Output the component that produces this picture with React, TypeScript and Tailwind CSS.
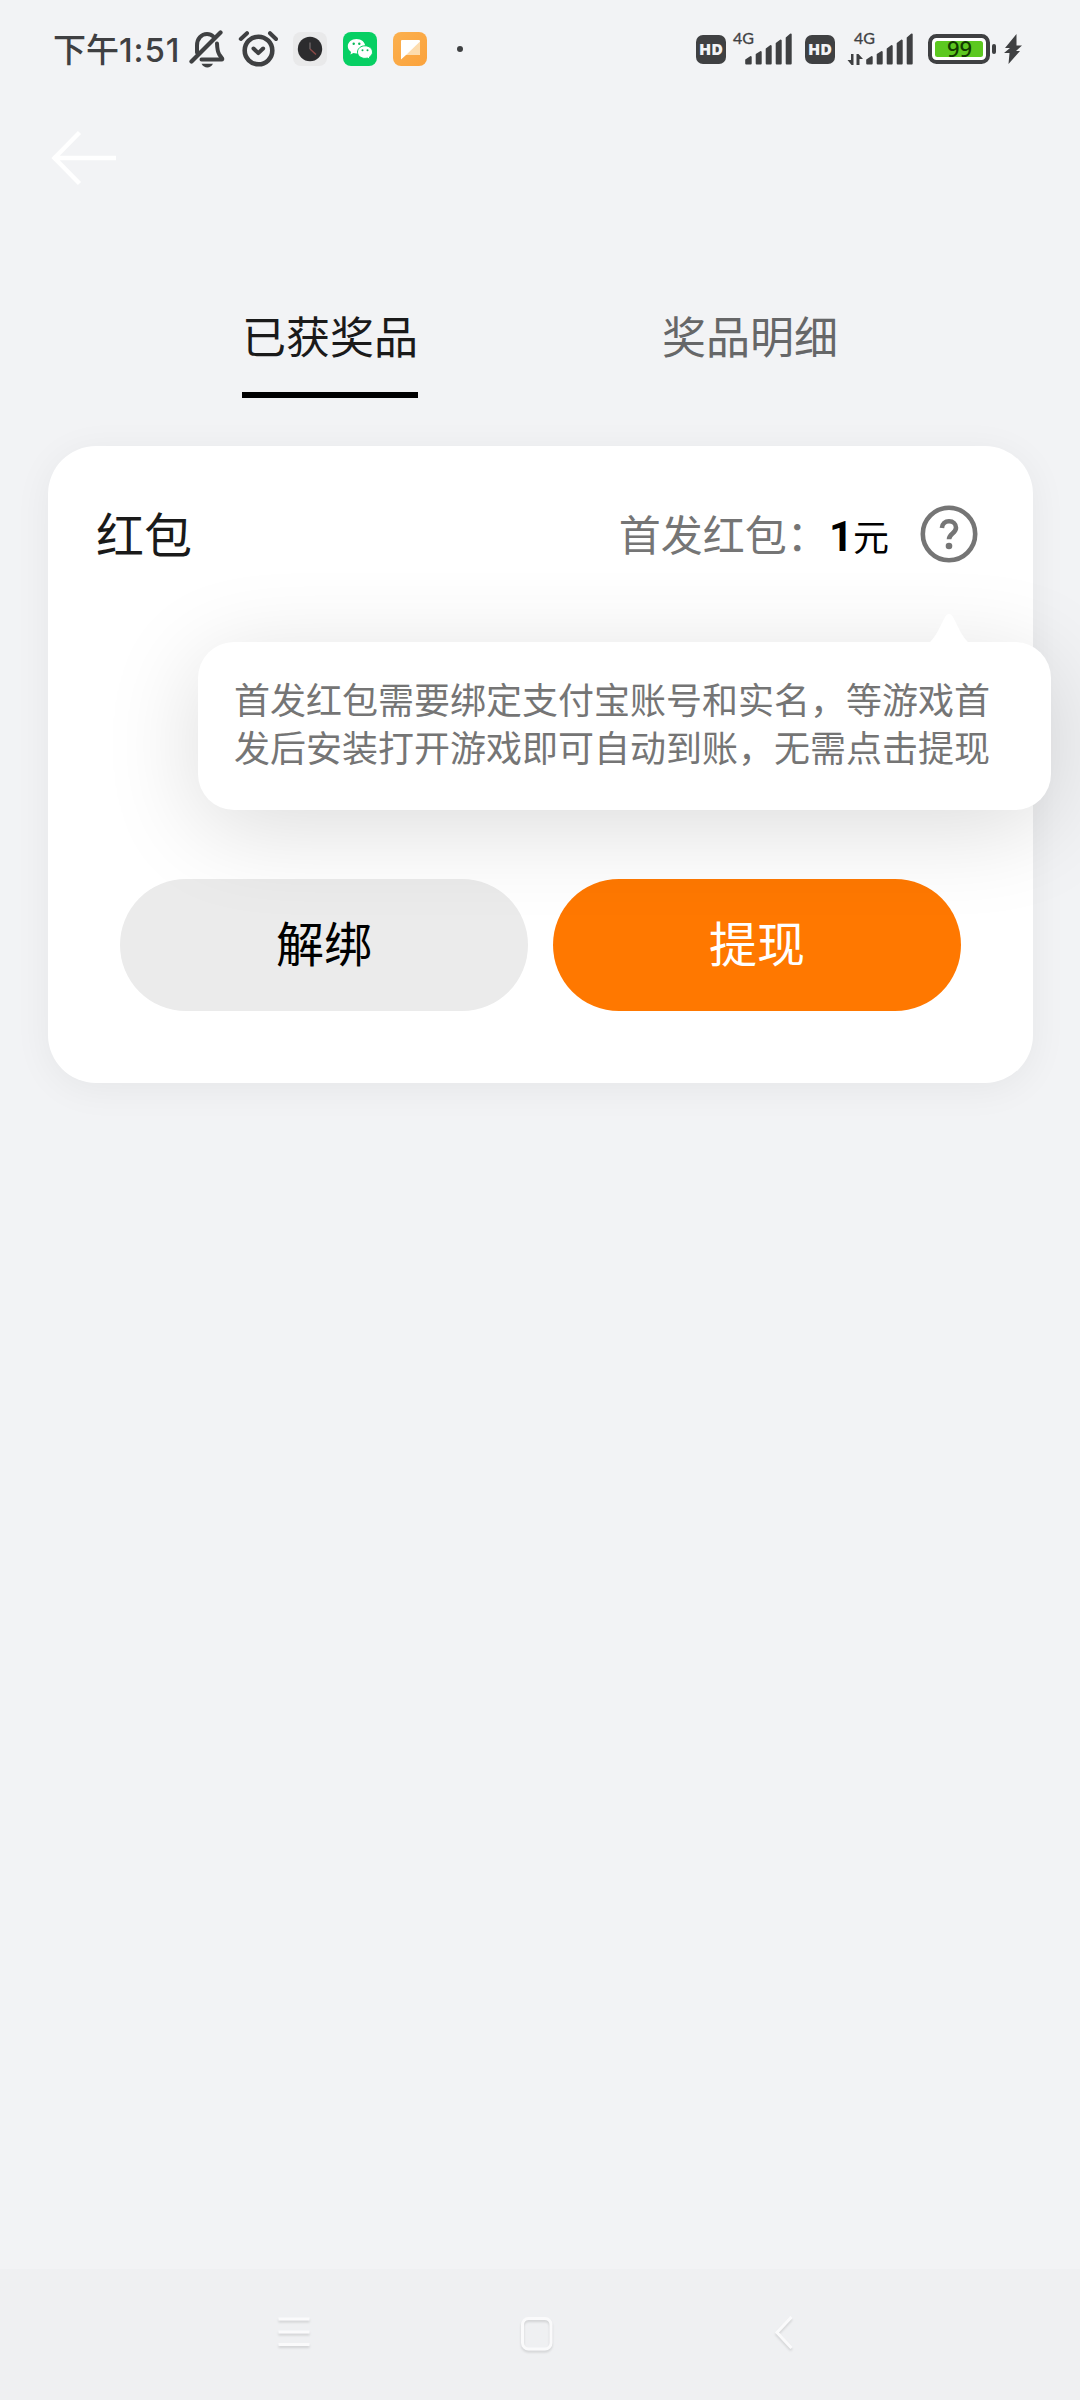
import React from "react";

const BellOffIcon: React.FC = () => (
  <svg width="36" height="40" viewBox="0 0 36 40" fill="none" stroke="#3f4042">
    <path
      d="M8 23.500V16.500C8 9.500 12.500 5 18 5c2.600 0 4.600.8 6.200 2.400M28 14.500c.2 5 .8 8.500 2.200 10.800l3 4.300c.3.600.1 1-.6 1H12.500"
      strokeWidth="4"
      strokeLinecap="round"
    />
    <path d="M2.500 32.500 31.500 3.500" strokeWidth="4.200" strokeLinecap="round" />
    <path d="M12.500 34.800h11.500c-1.500 2.600-3.300 3.700-5.700 3.700s-4.300-1.100-5.800-3.700z" fill="#3f4042" stroke="none" />
  </svg>
);

const AlarmIcon: React.FC = () => (
  <svg width="40" height="40" viewBox="0 0 40 40" fill="none" stroke="#3f4042" strokeLinecap="round">
    <circle cx="20.500" cy="21.500" r="13.800" strokeWidth="4.600" />
    <path d="m15.500 19.500 4.800 4.600 4.800-4.600" strokeWidth="4" strokeLinejoin="round" />
    <path d="M2.800 10 9 4.200M32 4.200l6 5.800" strokeWidth="4" />
  </svg>
);

const ClockAppIcon: React.FC = () => (
  <svg width="34" height="34" viewBox="0 0 34 34" fill="none">
    <rect width="34" height="34" rx="8" fill="#e9e9ea" />
    <circle cx="17" cy="17" r="12.200" fill="#2c2c2e" />
    <path d="M17 10.500V17" stroke="#6b6465" strokeWidth="1.400" />
    <path d="m17 17 6 5.500" stroke="#8d4a47" strokeWidth="1.400" />
  </svg>
);

const WechatAppIcon: React.FC = () => (
  <svg width="34" height="34" viewBox="0 0 34 34">
    <rect width="34" height="34" rx="8" fill="#07cf63" />
    <path
      d="M13.500 7C8.600 7 4.800 10.200 4.800 14.200c0 2.400 1.300 4.400 3.300 5.700l-.7 2.600 3-1.500c1 .3 2 .4 3.100.4 4.900 0 8.700-3.200 8.700-7.200S18.400 7 13.500 7z"
      fill="#fff"
    />
    <path
      d="M22 13.800c-4.200 0-7.500 2.800-7.500 6.300s3.300 6.300 7.500 6.300c.9 0 1.700-.1 2.500-.3l2.500 1.300-.6-2.300c1.900-1.200 3.100-3 3.100-5 0-3.500-3.300-6.300-7.500-6.300z"
      fill="#fff"
      stroke="#07cf63"
      strokeWidth="1"
    />
    <g fill="#07b958">
      <circle cx="10.700" cy="11.800" r="1.200" />
      <circle cx="16.300" cy="11.800" r="1.200" />
      <circle cx="19.500" cy="18.200" r="1" />
      <circle cx="24.500" cy="18.200" r="1" />
    </g>
  </svg>
);

const NoteAppIcon: React.FC = () => (
  <svg width="34" height="34" viewBox="0 0 34 34">
    <defs>
      <linearGradient id="note" x1="0" y1="0" x2="1" y2="1">
        <stop offset="0" stopColor="#fbb04f" />
        <stop offset="1" stopColor="#fba23c" />
      </linearGradient>
    </defs>
    <rect width="34" height="34" rx="8" fill="url(#note)" />
    <path d="M9 8h17a1 1 0 0 1 1 1v13a1 1 0 0 1-1 1H13l-5 4.500V9a1 1 0 0 1 1-1z" fill="#fff" />
    <path d="M27 9.500V22a1 1 0 0 1-1 1H13z" fill="#fddcae" />
  </svg>
);

const HdBadge: React.FC = () => (
  <div className="flex h-[29px] w-[30px] items-center justify-center rounded-[7px] bg-[#3f4042] font-['Open_Sans',sans-serif] text-[16px] leading-none font-extrabold text-[#f2f3f5]">
    HD
  </div>
);

interface SignalProps {
  data?: boolean;
}

const Signal: React.FC<SignalProps> = ({ data }) => (
  <svg className="overflow-visible" width="68" height="44" viewBox="0 -5 68 44" fill="#3f4042">
    <text x="7" y="12" fontSize="15.500" fontFamily="Lato, sans-serif" textLength="21" lengthAdjust="spacingAndGlyphs" stroke="#3f4042" strokeWidth="0.300">
      4G
    </text>
    {data && (
      <path d="M4 22h2.500v11H4.500L.5 28H4zM9.500 22h2l4.500 5h-3.500v6h-3z" />
    )}
    <g stroke="#3f4042" strokeWidth="2" strokeLinejoin="round">
      <path d="M20.200 31.500v-3.500l4.500-3V31.500z" />
      <path d="M30.700 31.500V22.500l4-2.500V31.500z" />
      <path d="M40.700 31.500V17l4-3V31.500z" />
      <path d="M50.700 31.500V11.500l4-3V31.500z" />
      <path d="M60.700 31.500V6l4-3.500V31.500z" />
    </g>
  </svg>
);

const Battery: React.FC = () => (
  <svg width="70" height="30" viewBox="0 0 70 30">
    <rect x="2" y="2" width="58" height="26" rx="6.500" fill="#fff" stroke="#3f4042" strokeWidth="4" />
    <rect x="7" y="7" width="48" height="16" rx="2.500" fill="#5cc820" />
    <rect x="64" y="10" width="4" height="10" rx="2" fill="#3f4042" />
    <text
      x="31.500"
      y="23"
      fontSize="22"
      fontFamily="Noto Sans, sans-serif"
      fontWeight="500"
      textAnchor="middle"
      fill="#123c00"
    >
      99
    </text>
  </svg>
);

const StatusBar: React.FC = () => (
  <header className="flex h-[98px] items-center pl-[53px] text-[#3f4042]">
    <div className="flex w-[129px] items-baseline text-[33px] leading-none font-medium whitespace-nowrap">
      <span>下午</span>
      <span className="font-['Inter'] tracking-[0.9px]">1:51</span>
    </div>
    <div className="ml-[7px] flex items-center">
      <BellOffIcon />
      <div className="ml-[13px]">
        <AlarmIcon />
      </div>
    </div>
    <div className="ml-[15px] flex items-center gap-4">
      <ClockAppIcon />
      <WechatAppIcon />
      <NoteAppIcon />
    </div>
    <div className="ml-[30px] size-[6px] rounded-full bg-[#3f4042]" />
    <div className="ml-[233px] flex items-center">
      <HdBadge />
      <Signal />
      <div className="ml-[11px]">
        <HdBadge />
      </div>
      <div className="ml-[12px]">
        <Signal data />
      </div>
      <div className="ml-[13px]">
        <Battery />
      </div>
      <svg className="ml-[5px]" width="20" height="32" viewBox="0 0 20 32" fill="#3f4042">
        <path d="M13.500 1 2 15h5L1 20h5.500L5.500 31 17 18h-4l6-5.500h-5.500z" />
      </svg>
    </div>
  </header>
);

const tabs = [
  { label: "已获奖品", active: true },
  { label: "奖品明细", active: false },
];

const Tabs: React.FC = () => (
  <nav className="mt-[114px] grid h-[96px] grid-cols-2 px-[120px]">
    {tabs.map((tab) => (
      <div key={tab.label} className="flex justify-center">
        <button
          className={
            tab.active
              ? "h-full border-b-[6px] border-black pb-[24px] text-[44px] leading-none text-[#1a1a1a]"
              : "h-full border-b-[6px] border-transparent pb-[24px] text-[44px] leading-none text-[#666768]"
          }
        >
          {tab.label}
        </button>
      </div>
    ))}
  </nav>
);

const Tooltip: React.FC = () => (
  <div className="absolute top-[196px] left-[150px] w-[853px] rounded-[36px] bg-white px-9 pt-[32px] pb-[40px] text-[36px] leading-[48px] text-[#757575] shadow-[0_18px_96px_rgba(0,0,0,0.14)]">
    <svg className="absolute -top-[29px] left-[730px]" width="42" height="30" viewBox="0 0 42 30">
      <path d="M1 30C7 25 12 14 17 4c2-4 6-4 8 0 5 10 10 21 16 26z" fill="#fff" />
    </svg>
    <p className="w-[756px]">首发红包需要绑定支付宝账号和实名，等游戏首发后安装打开游戏即可自动到账，无需点击提现</p>
  </div>
);

const RedPacketCard: React.FC = () => (
  <section className="relative mx-12 mt-12 flex h-[637px] w-[985px] flex-col justify-between rounded-[48px] bg-white px-12 pb-[72px] shadow-[0_6px_38px_rgba(0,0,0,0.055)]">
    <div className="flex h-[177px] items-center">
      <h2 className="pb-[5px] text-[48px] text-[#1a1a1a]">红包</h2>
      <div className="ml-auto flex items-center">
        <div className="flex items-baseline pb-px">
          <span className="text-[42px] text-[#757575]">首发红包：</span>
          <b className="font-['Roboto'] text-[42px] font-bold text-black">1</b>
          <span className="text-[36px] text-black">元</span>
        </div>
        <svg className="mr-[7px] mb-px ml-[31px]" width="58" height="58" viewBox="0 0 58 58" fill="none" stroke="#757575">
          <circle cx="29" cy="29" r="26.200" strokeWidth="4.600" />
          <path
            d="M21.900 23c.4-4.300 3.300-6.700 7.100-6.700 4.100 0 7 2.600 7 6.500 0 5.500-7 6-7 11.500"
            strokeWidth="4.600"
          />
          <circle cx="29" cy="41" r="3.300" fill="#757575" stroke="none" />
        </svg>
      </div>
    </div>
    <div className="flex gap-[25px] px-6 text-[48px] leading-none">
      <button className="h-[132px] flex-1 rounded-full bg-[#ebebeb] pb-[9px] text-black">解绑</button>
      <button className="h-[132px] flex-1 rounded-full bg-[#ff7800] pb-[9px] text-white">提现</button>
    </div>
    <Tooltip />
  </section>
);

const NavBar: React.FC = () => (
  <footer className="mt-auto flex h-[131px] justify-between bg-[#eff0f2] pt-[44px] pr-[280px] pl-[274px]">
    <svg className="drop-shadow-[0_2px_1px_rgba(0,0,0,0.12)]" width="40" height="44" viewBox="0 0 40 44" fill="none" stroke="#fafafb" strokeWidth="3">
      <path d="M4.500 6h31M4.500 19h31M4.500 31.500h31" />
    </svg>
    <svg className="drop-shadow-[0_2px_1px_rgba(0,0,0,0.12)]" width="40" height="44" viewBox="0 0 40 44" fill="none" stroke="#fafafb" strokeWidth="3">
      <rect x="5.500" y="5.500" width="28.500" height="30.500" rx="6" />
    </svg>
    <svg className="drop-shadow-[0_2px_1px_rgba(0,0,0,0.12)]" width="40" height="44" viewBox="0 0 40 44" fill="none" stroke="#fafafb" strokeWidth="3">
      <path d="M31.500 4 17 19.500 31.500 35" />
    </svg>
  </footer>
);

const App: React.FC = () => {
  return (
    <div className="flex h-[2400px] w-[1080px] flex-col overflow-hidden bg-[#f2f3f5] font-['Noto_Sans_CJK_SC',sans-serif]">
      <StatusBar />
      <button className="mt-[30px] ml-[50px] w-[70px]">
        <svg width="70" height="60" viewBox="0 0 70 60" fill="none" stroke="#fff" strokeWidth="4.500">
          <path d="M66 30H4M29.500 4.500 4.500 30l25 25.500" />
        </svg>
      </button>
      <Tabs />
      <RedPacketCard />
      <NavBar />
    </div>
  );
};

export default App;
